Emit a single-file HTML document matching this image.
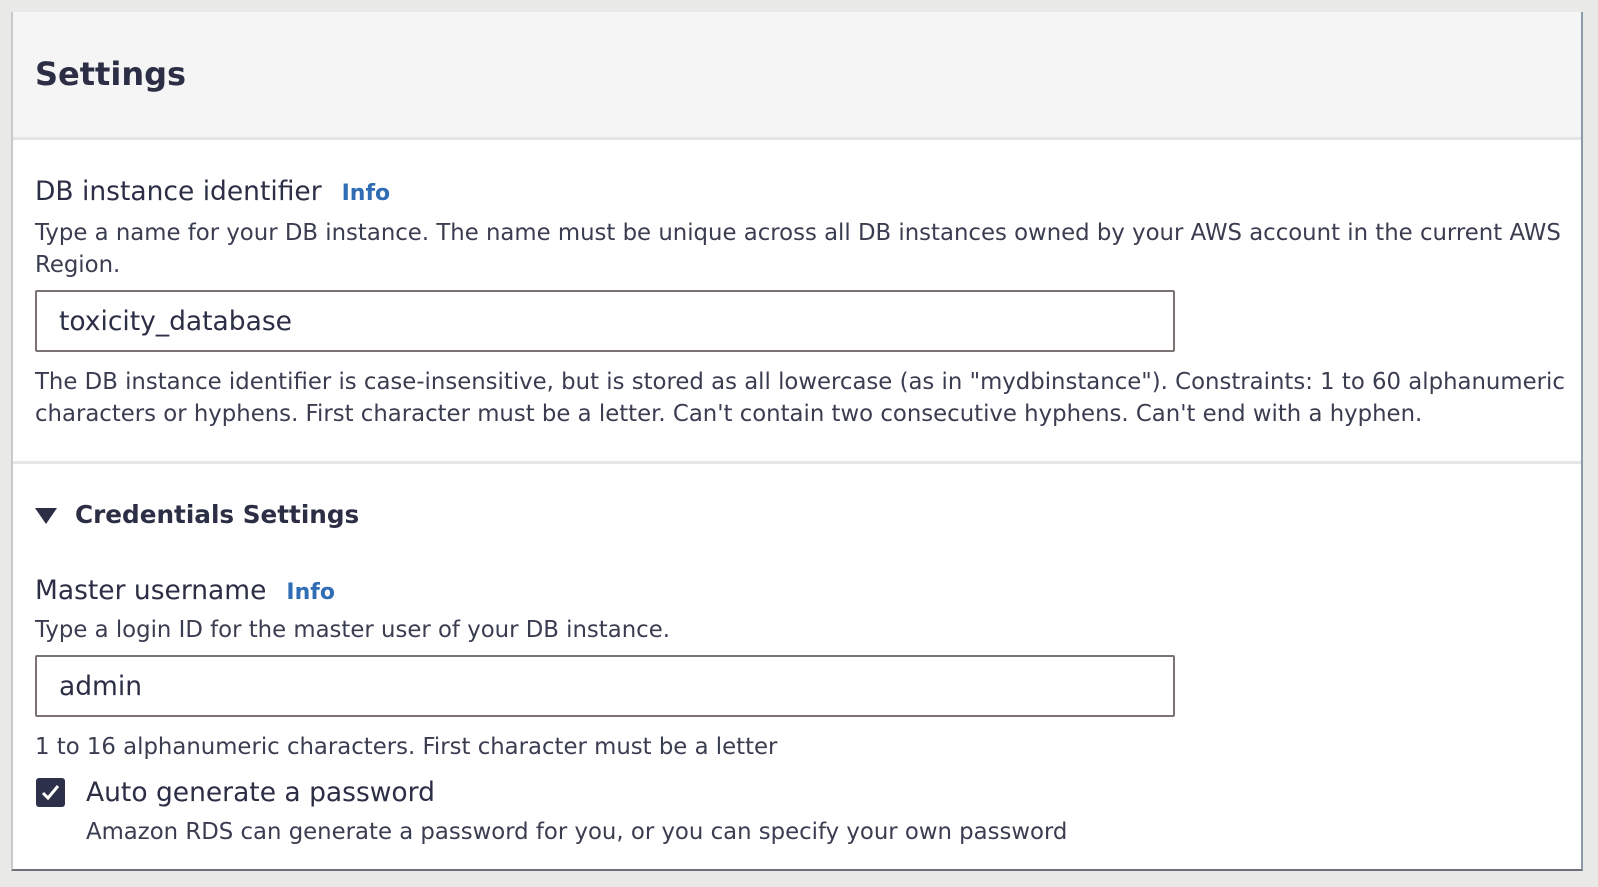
<!DOCTYPE html>
<html><head><meta charset="utf-8"><style>
html,body{margin:0;padding:0;}
body{width:1598px;height:887px;background:#e9eae8;position:relative;overflow:hidden;font-family:"DejaVu Sans","Liberation Sans",sans-serif;color:#2b2e45;}
.panel{position:absolute;left:11px;top:12px;width:1572px;height:859px;background:#fff;border-left:2px solid #c9c9c9;border-right:2px solid #8a9aa8;border-bottom:2px solid #6f6f78;box-sizing:border-box;}
.hdr{position:absolute;left:0;top:0;right:0;height:125px;background:#f5f5f5;border-bottom:3px solid #e4e4e4;}
.t{position:absolute;white-space:nowrap;}
.h1{font-size:32px;font-weight:bold;left:22px;top:43px;}
.lbl{font-size:26.5px;}
.info{color:#2f6eb5;font-weight:bold;font-size:22px;margin-left:20px;}
.d{font-size:22.8px;color:#3a3d50;}
.inp{position:absolute;left:22px;width:1140px;height:62px;border:2px solid #7b7372;border-radius:2px;box-sizing:border-box;background:#fff;}
.inp span{position:absolute;left:22px;top:14px;font-size:26.5px;}
.div{position:absolute;left:0;right:0;top:449px;height:3px;background:#e6e6e6;}
.cb{position:absolute;left:23px;top:766px;width:29px;height:29px;background:#2d3049;border-radius:3px;}
</style></head><body>
<div class="panel">
<div class="hdr"></div>
<div class="t h1">Settings</div>
<div class="t lbl" style="left:22px;top:164px;">DB instance identifier<span class="info">Info</span></div>
<div class="t d" style="left:22px;top:208px;">Type a name for your DB instance. The name must be unique across all DB instances owned by your AWS account in the current AWS</div>
<div class="t d" style="left:22px;top:240px;">Region.</div>
<div class="inp" style="top:278px;"><span>toxicity_database</span></div>
<div class="t d" style="left:22px;top:357px;">The DB instance identifier is case-insensitive, but is stored as all lowercase (as in "mydbinstance"). Constraints: 1 to 60 alphanumeric</div>
<div class="t d" style="left:22px;top:389px;">characters or hyphens. First character must be a letter. Can't contain two consecutive hyphens. Can't end with a hyphen.</div>
<div class="div"></div>
<svg style="position:absolute;left:22px;top:496px" width="22" height="16"><path d="M0 0H22L11 16Z" fill="#2b2e45"/></svg>
<div class="t" style="left:62px;top:488px;font-size:24.7px;font-weight:bold;">Credentials Settings</div>
<div class="t lbl" style="left:22px;top:563px;">Master username<span class="info">Info</span></div>
<div class="t d" style="left:22px;top:605px;">Type a login ID for the master user of your DB instance.</div>
<div class="inp" style="top:643px;"><span>admin</span></div>
<div class="t d" style="left:22px;top:722px;">1 to 16 alphanumeric characters. First character must be a letter</div>
<div class="cb"><svg width="29" height="29"><path d="M7 15L12 20L22 8" stroke="#fff" stroke-width="3" fill="none"/></svg></div>
<div class="t" style="left:73px;top:765px;font-size:26.5px;">Auto generate a password</div>
<div class="t d" style="left:73px;top:807px;">Amazon RDS can generate a password for you, or you can specify your own password</div>
</div>
</body></html>
